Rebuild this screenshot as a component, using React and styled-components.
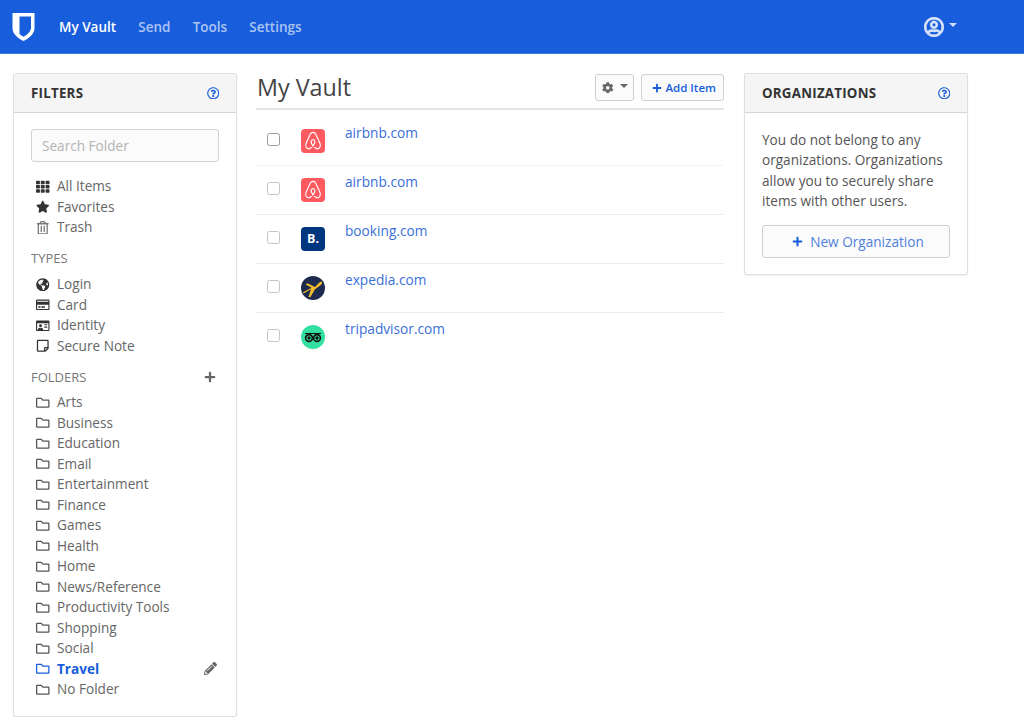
import React from "react";
import styled, { createGlobalStyle } from "styled-components";
import {
  FaTh, FaStar, FaRegTrashAlt, FaGlobeAmericas, FaRegCreditCard, FaRegIdCard,
  FaRegStickyNote, FaRegFolder, FaPlus, FaPencilAlt, FaCog, FaRegQuestionCircle, FaRegUserCircle,
} from "react-icons/fa";

const Global = createGlobalStyle`
  html, body { margin: 0; padding: 0; background: #fff; }
  body { font-family: "Open Sans", "Liberation Sans", sans-serif; font-size: 14px; color: #555; overflow: hidden; }
  * { box-sizing: border-box; }
`;

const Nav = styled.header`
  height: 54px; background: #175ddc; display: flex; align-items: center;
  padding: 0 67px 0 12px; border-bottom: 1px solid #3f79e3;
`;
const Logo = styled.svg`width: 23px; height: 28px; margin-right: 24px; flex: none;`;
const NavLink = styled.a`
  font-weight: 600; font-size: 13.5px; margin-right: 22.2px;
  color: ${p => (p.$active ? "#fff" : "rgba(255,255,255,.65)")};
`;
const NavUser = styled.div`
  margin-left: auto; display: flex; align-items: center; gap: 5px; color: rgba(255,255,255,.8); font-size: 20px;
  svg { stroke: currentColor; stroke-width: 20px; }
`;
const Caret = styled.span`
  width: 0; height: 0; border-left: 4px solid transparent; border-right: 4px solid transparent;
  border-top: 4px solid currentColor; margin-bottom: 3px;
`;

const Layout = styled.main`
  display: grid; grid-template-columns: 224px 469px 224px; column-gap: 19px;
  padding: 19px 13px 0; align-items: start;
`;
const Card = styled.section`
  background: #fff; border: 1px solid rgba(0,0,0,.125); border-radius: 3px;
  box-shadow: 0 1px 2px rgba(0,0,0,.06);
`;
const CardHead = styled.div`
  height: 39px; background: #f5f5f5; border-bottom: 1px solid rgba(0,0,0,.125);
  display: flex; align-items: center; justify-content: space-between; padding: 0 17px;
  font-weight: 700; font-size: 13.3px; color: #333; letter-spacing: .25px;
`;
const Help = styled(FaRegQuestionCircle)`color: #175ddc; font-size: 12.5px;`;
const FilterBody = styled.div`padding: 16px 17px 16px;`;
const Search = styled.input`
  display: block; width: 100%; height: 33px; border: 1px solid #ced4da; border-radius: 3px;
  background: #fbfbfb; padding: 0 10px; margin-bottom: 14px;
  font: 13.6px "Open Sans", sans-serif;
  &::placeholder { color: #b4b4b4; opacity: 1; }
`;
const Group = styled.ul`
  list-style: none; margin: 0 0 10.5px; padding: 0;
  &:last-child { margin-bottom: 0; }
`;
const Item = styled.li`
  height: 20.5px; display: flex; align-items: center; font-size: 13.6px; line-height: 20.5px;
  color: ${p => (p.$active ? "#175ddc" : "#666")};
  font-weight: ${p => (p.$active ? 700 : 400)};
`;
const ItemIcon = styled.span`
  width: 26px; flex: none; display: flex; justify-content: center; padding-left: 3px; padding-right: 5px;
  font-size: 13.5px; color: ${p => p.$color || "#333"};
`;
const EditIcon = styled(FaPencilAlt)`margin-left: auto; color: #666; font-size: 13px; margin-right: 2px;`;
const GroupTitle = styled.div`
  height: 20.5px; display: flex; align-items: center; justify-content: space-between;
  color: #777; font-size: 13px; margin-bottom: ${p => p.$gap}px;
`;
const AddFolder = styled(FaPlus)`color: #666; font-size: 12px; margin-right: 3px;`;

const TitleBar = styled.div`
  height: 37px; margin-right: 1px; display: flex; align-items: flex-start; border-bottom: 2px solid #e4e6e8; padding-left: 1px;
`;
const Title = styled.h1`
  margin: -3px auto 0 0; font-weight: 400; font-size: 23.3px; line-height: 34px; color: #444;
`;
const Button = styled.button`
  height: 27px; margin-top: 1px; margin-left: 7px; background: #fbfbfb; border: 1px solid #ccd0d4; border-radius: 3px;
  display: inline-flex; align-items: center; justify-content: center; gap: 3px;
  font: 600 11.5px "Open Sans", sans-serif; color: #175ddc; padding: 0 7px 0 10px;
`;
const GearButton = styled(Button)`color: #666; width: 39px; gap: 6px; padding: 0;`;
const Rows = styled.div`padding-top: 7px; margin-right: 1px;`;
const Row = styled.div`
  height: 49px; display: grid; grid-template-columns: 11px 13px 21px 24px 20px 1fr;
  border-bottom: 1px solid #e9eaec;
  &:first-child { border-bottom-color: #f3f3f4; }
  &:last-child { border-bottom: 0; }
`;
const Check = styled.span`
  grid-column: 2; width: 13px; height: 13px; margin-top: 16px;
  border: 1.5px solid ${p => (p.$strong ? "#9a9a9a" : "#c4c4c4")}; border-radius: 2.5px; background: #fff;
`;
const Thumb = styled.span`
  grid-column: 4; width: 24px; height: 24px; margin-top: 12px; display: flex;
  align-items: center; justify-content: center; overflow: hidden;
  background: ${p => p.$bg}; border-radius: ${p => (p.$round ? "50%" : "4px")};
`;
const BookingMark = styled.span`color: #fff; font: 700 12.5px "Open Sans", sans-serif; line-height: 24px;`;
const Site = styled.a`grid-column: 6; font-size: 13.7px; line-height: 20px; margin-top: 6px; color: #3a6fd8;`;

const OrgBody = styled.div`padding: 17px 17px 16px;`;
const OrgText = styled.p`margin: 0 0 13px; font-size: 13.6px; line-height: 20.4px; color: #555;`;
const NewOrg = styled.button`
  width: 100%; height: 33px; background: #fbfbfb; border: 1px solid #ccd0d4; border-radius: 3px;
  display: flex; align-items: center; justify-content: center; gap: 7px; padding: 0 0 0 4px;
  font: 400 13.6px "Open Sans", sans-serif; color: #4f7fdc;
`;
const PlusBlue = styled(FaPlus)`color: #175ddc; font-size: 11px;`;

const Airbnb = () => (
  <svg width="18" height="20" viewBox="0 0 16 18" fill="none" stroke="#fff" strokeWidth="1">
    <path d="M8 1.200C6.800 1.200 6 1.800 5.500 3L1.600 11.500C.6 14.500 3 17 5.500 15.600 6.800 14.900 9 12.500 9.600 10.600 10 9 9 7.600 8 7.600S6 9 6.400 10.600C7 12.500 9.200 14.900 10.500 15.600 13 17 15.400 14.500 14.400 11.500L10.500 3C10 1.800 9.200 1.200 8 1.200Z" />
  </svg>
);
const Plane = () => (
  <svg width="24" height="24" viewBox="0 0 24 24">
    <path fill="#f5bd2e" d="M2.500 17.500l7.500-4.200L7.500 21l1.800.2 4.700-8 5.200-3.600c1.700-1.300 2.200-3 1.700-3.500-.6-.6-2.200-.2-3.500 1.300l-3.400 3.700L6.500 7.200 4.700 8.600l6 3.200L2 16.300z" />
  </svg>
);
const Owl = () => (
  <svg width="18" height="12" viewBox="0 0 18 12" fill="none" stroke="#111" strokeWidth="1.600">
    <path d="M1 2.500h16" strokeWidth="1.200" />
    <circle cx="5" cy="7" r="3.400" />
    <circle cx="13" cy="7" r="3.400" />
    <circle cx="5" cy="7" r=".9" fill="#111" />
    <circle cx="13" cy="7" r=".9" fill="#111" />
  </svg>
);

const folders = ["Arts","Business","Education","Email","Entertainment","Finance","Games","Health","Home","News/Reference","Productivity Tools","Shopping","Social"];
const sites = [
  ["airbnb.com", "#ff5a5f", false, <Airbnb />],
  ["airbnb.com", "#ff5a5f", false, <Airbnb />],
  ["booking.com", "#003580", false, <BookingMark>B.</BookingMark>],
  ["expedia.com", "#1d2a4d", true, <Plane />],
  ["tripadvisor.com", "#34e0a1", true, <Owl />],
];

export default function App() {
  return (
    <>
      <Global />
      <Nav>
        <Logo viewBox="0 0 23 28">
          <path fill="#fff" fillRule="evenodd" d="M.5 0h22v15c0 6-5.500 10.500-11 13C6 25.500.5 21 .5 15zM7.500 3.500v17.500c1.300 1.200 2.700 2.100 4 2.800 3.200-1.800 7.500-5 7.500-9V3.500z" />
        </Logo>
        <NavLink $active>My Vault</NavLink>
        <NavLink>Send</NavLink>
        <NavLink>Tools</NavLink>
        <NavLink>Settings</NavLink>
        <NavUser><FaRegUserCircle /><Caret /></NavUser>
      </Nav>
      <Layout>
        <Card>
          <CardHead>FILTERS<Help /></CardHead>
          <FilterBody>
            <Search placeholder="Search Folder" />
            <Group>
              <Item><ItemIcon><FaTh /></ItemIcon>All Items</Item>
              <Item><ItemIcon><FaStar /></ItemIcon>Favorites</Item>
              <Item><ItemIcon $color="#777"><FaRegTrashAlt /></ItemIcon>Trash</Item>
            </Group>
            <GroupTitle $gap={5.5}>TYPES</GroupTitle>
            <Group>
              <Item><ItemIcon><FaGlobeAmericas /></ItemIcon>Login</Item>
              <Item><ItemIcon><FaRegCreditCard /></ItemIcon>Card</Item>
              <Item><ItemIcon><FaRegIdCard /></ItemIcon>Identity</Item>
              <Item><ItemIcon><FaRegStickyNote /></ItemIcon>Secure Note</Item>
            </Group>
            <GroupTitle $gap={5}>FOLDERS<AddFolder /></GroupTitle>
            <Group>
              {folders.map(f => <Item key={f}><ItemIcon $color="#555"><FaRegFolder /></ItemIcon>{f}</Item>)}
              <Item $active><ItemIcon $color="#175ddc"><FaRegFolder /></ItemIcon>Travel<EditIcon /></Item>
              <Item><ItemIcon $color="#555"><FaRegFolder /></ItemIcon>No Folder</Item>
            </Group>
          </FilterBody>
        </Card>
        <div>
          <TitleBar>
            <Title>My Vault</Title>
            <GearButton><FaCog /><Caret /></GearButton>
            <Button><FaPlus size={10} />Add Item</Button>
          </TitleBar>
          <Rows>
            {sites.map(([name, bg, round, mark], i) => (
              <Row key={i}>
                <Check $strong={i === 0} />
                <Thumb $bg={bg} $round={round}>{mark}</Thumb>
                <Site>{name}</Site>
              </Row>
            ))}
          </Rows>
        </div>
        <Card>
          <CardHead>ORGANIZATIONS<Help /></CardHead>
          <OrgBody>
            <OrgText>You do not belong to any organizations. Organizations allow you to securely share items with other users.</OrgText>
            <NewOrg><PlusBlue />New Organization</NewOrg>
          </OrgBody>
        </Card>
      </Layout>
    </>
  );
}
